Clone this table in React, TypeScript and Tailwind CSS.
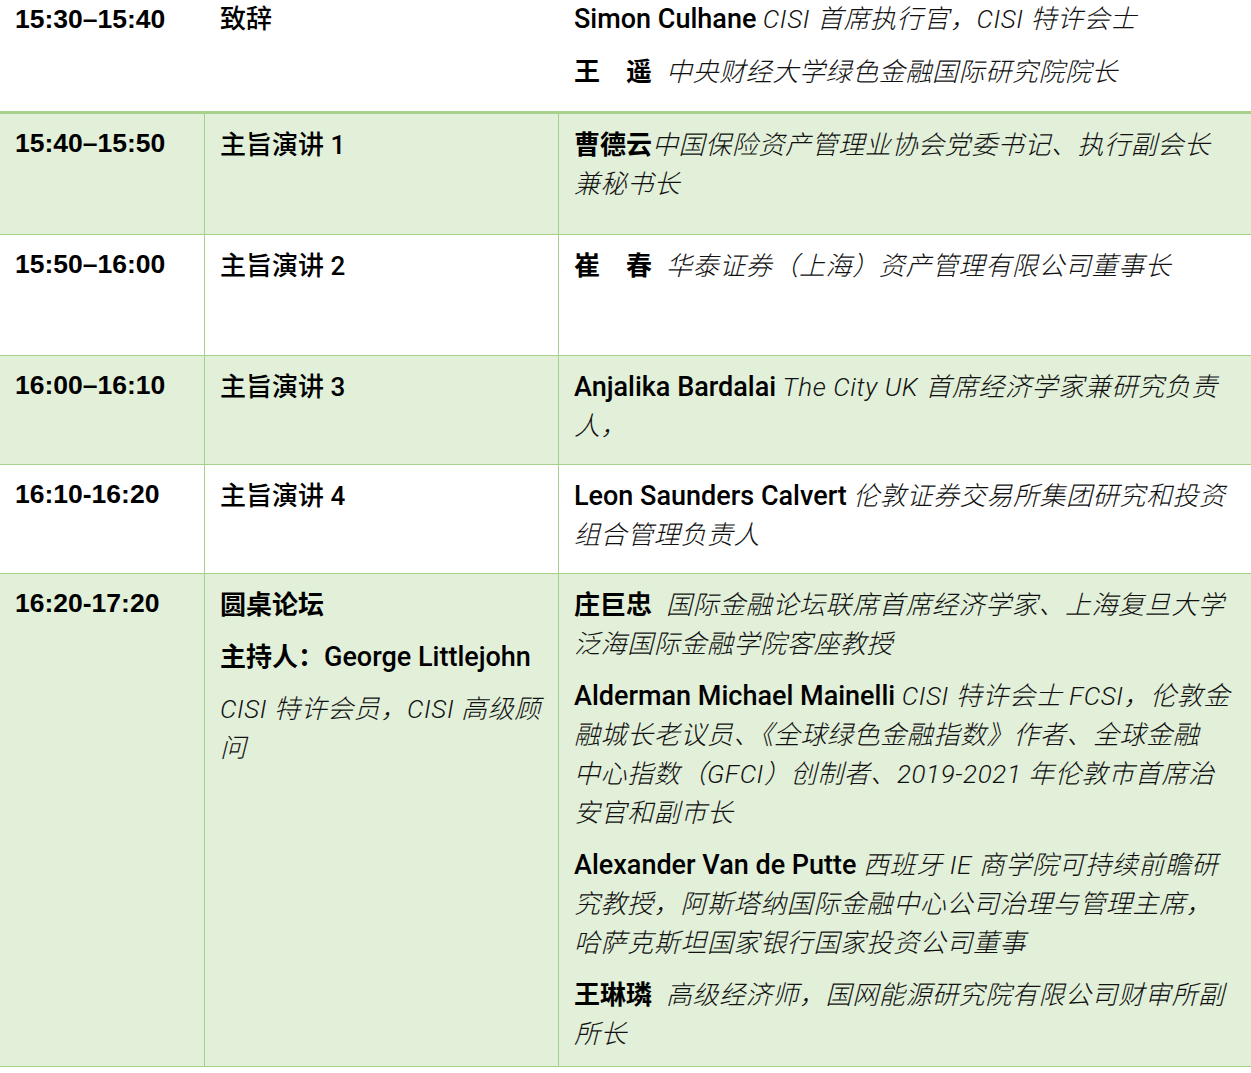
const timeFont = "font-['Liberation_Sans',Arial,sans-serif] font-bold text-[26.5px] leading-[39px] text-black";
const cjkFont = "font-['Roboto','Noto_Sans_CJK_SC',sans-serif] text-[26px] leading-[39px] text-black";

function Name({ children, gap }: { children: React.ReactNode; gap?: boolean }) {
  return (
    <span className={"font-medium text-[27px] text-black " + (gap ? "mr-[14px]" : "")}>
      {children}
    </span>
  );
}

function CnName({ children, gap }: { children: React.ReactNode; gap?: boolean }) {
  return (
    <span className={"font-bold text-black " + (gap ? "mr-[14px]" : "")}>
      {children}
    </span>
  );
}

function Title({ children }: { children: React.ReactNode }) {
  return <span className="italic font-light tracking-[0.6px] text-[#111]">{children}</span>;
}

type Row = {
  time: string;
  topic: React.ReactNode;
  people: React.ReactNode;
  height: string;
  green: boolean;
};

const rows: Row[] = [
  {
    time: "15:40–15:50",
    topic: <p className="font-medium">主旨演讲 1</p>,
    people: (
      <p>
        <CnName>曹德云</CnName>
        <Title>
          中国保险资产管理业协会党委书记、执行副会长
          <br />
          兼秘书长
        </Title>
      </p>
    ),
    height: "h-[121px]",
    green: true,
  },
  {
    time: "15:50–16:00",
    topic: <p className="font-medium">主旨演讲 2</p>,
    people: (
      <p>
        <CnName gap>崔　春</CnName>
        <Title>华泰证券（上海）资产管理有限公司董事长</Title>
      </p>
    ),
    height: "h-[121px]",
    green: false,
  },
  {
    time: "16:00–16:10",
    topic: <p className="font-medium">主旨演讲 3</p>,
    people: (
      <p>
        <Name>Anjalika Bardalai</Name>{" "}
        <Title>
          The City UK 首席经济学家兼研究负责
          <br />
          人，
        </Title>
      </p>
    ),
    height: "h-[109px]",
    green: true,
  },
  {
    time: "16:10-16:20",
    topic: <p className="font-medium">主旨演讲 4</p>,
    people: (
      <p>
        <Name>Leon Saunders Calvert</Name>{" "}
        <Title>
          伦敦证券交易所集团研究和投资
          <br />
          组合管理负责人
        </Title>
      </p>
    ),
    height: "h-[109px]",
    green: false,
  },
  {
    time: "16:20-17:20",
    topic: (
      <div className="flex flex-col gap-[13px]">
        <p className="font-bold">圆桌论坛</p>
        <p>
          <span className="font-bold">主持人：</span>
          <span className="font-medium text-[27px]">George Littlejohn</span>
        </p>
        <p>
          <Title>
            CISI 特许会员，CISI 高级顾
            <br />
            问
          </Title>
        </p>
      </div>
    ),
    people: (
      <div className="flex flex-col gap-[13px]">
        <p>
          <CnName gap>庄巨忠</CnName>
          <Title>
            国际金融论坛联席首席经济学家、上海复旦大学
            <br />
            泛海国际金融学院客座教授
          </Title>
        </p>
        <p>
          <Name>Alderman Michael Mainelli</Name>{" "}
          <Title>
            CISI 特许会士 FCSI，伦敦金
            <br />
            融城长老议员、《全球绿色金融指数》作者、全球金融
            <br />
            中心指数（GFCI）创制者、2019-2021 年伦敦市首席治
            <br />
            安官和副市长
          </Title>
        </p>
        <p>
          <Name>Alexander Van de Putte</Name>{" "}
          <Title>
            西班牙 IE 商学院可持续前瞻研
            <br />
            究教授，阿斯塔纳国际金融中心公司治理与管理主席，
            <br />
            哈萨克斯坦国家银行国家投资公司董事
          </Title>
        </p>
        <p>
          <CnName gap>王琳璘</CnName>
          <Title>
            高级经济师，国网能源研究院有限公司财审所副
            <br />
            所长
          </Title>
        </p>
      </div>
    ),
    height: "h-[493px]",
    green: true,
  },
];

export default function App() {
  return (
    <div className="w-[1251px] h-[1073px] bg-white overflow-hidden">
      {/* opening row, no column rules */}
      <div className="flex h-[114px] border-b-[3px] border-[#a8d08d] bg-white">
        <div className={"w-[205px] shrink-0 pl-[15px] " + timeFont}>15:30–15:40</div>
        <div className={"w-[354px] shrink-0 pl-[15px] " + cjkFont}>
          <p className="font-medium">致辞</p>
        </div>
        <div className={"flex-1 pl-[15px] whitespace-nowrap " + cjkFont}>
          <div className="flex flex-col gap-[14px]">
            <p>
              <Name>Simon Culhane</Name>{" "}
              <Title>CISI 首席执行官，CISI 特许会士</Title>
            </p>
            <p>
              <CnName gap>王　遥</CnName>
              <Title>中央财经大学绿色金融国际研究院院长</Title>
            </p>
          </div>
        </div>
      </div>

      {rows.map((row) => (
        <div
          key={row.time}
          className={
            "flex border-b border-[#a8d08d] " +
            row.height +
            (row.green ? " bg-[#e2efd9]" : " bg-white")
          }
        >
          <div className={"w-[205px] shrink-0 border-r border-[#a8d08d] pl-[15px] pt-[10px] " + timeFont}>
            {row.time}
          </div>
          <div className={"w-[354px] shrink-0 border-r border-[#a8d08d] pl-[15px] pt-[12px] whitespace-nowrap " + cjkFont}>
            {row.topic}
          </div>
          <div className={"flex-1 pl-[15px] pt-[12px] whitespace-nowrap " + cjkFont}>
            {row.people}
          </div>
        </div>
      ))}
    </div>
  );
}
